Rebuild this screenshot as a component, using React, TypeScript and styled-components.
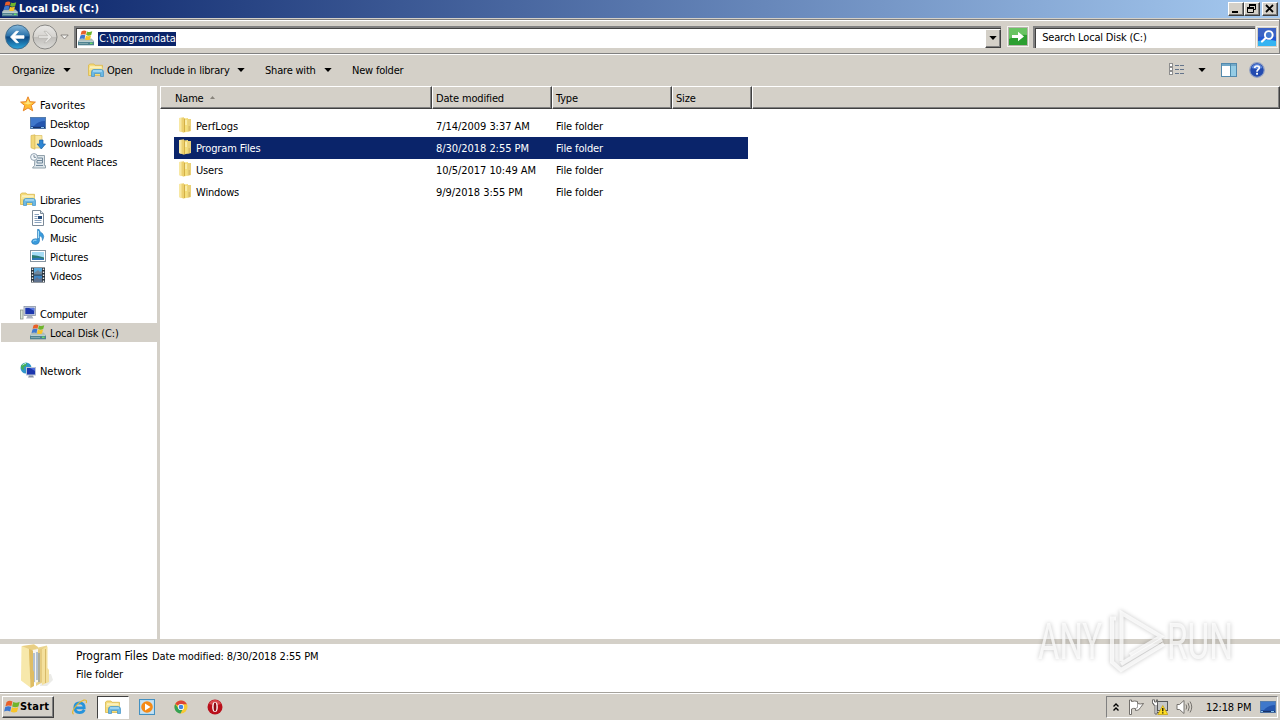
import React from "react";
import styled, { createGlobalStyle, css } from "styled-components";

const face = "#d4d0c8";
const navy = "#0a246a";

/* ---------- icons ---------- */

const Flag = () => (
    <>
        <path d="M1.500 2.300Q4.500 .4 7.200 2L6.200 6.400Q3.500 5 .4 6.500Z" fill="#e8602a" />
        <path d="M7.900 2.500Q11 4 14.200 2.200L13 6.700Q10 8.200 6.900 6.800Z" fill="#6fb52c" />
        <path d="M.2 7.200Q3.200 5.800 6 7.100L5 11.500Q2.300 10.200 -.9 11.500Z" fill="#3d78d0" />
        <path d="M6.700 7.500Q9.700 8.900 12.800 7.400L11.600 11.900Q8.600 13.300 5.600 11.900Z" fill="#f8c428" />
    </>
);

const DiskIcon = () => (
    <svg width="16" height="16" viewBox="0 0 16 16">
        <path d="M0 11L2 8.500H13.500L16 11V15H0Z" fill="#a9bab9" />
        <path d="M0 11.300H16V15.300H0Z" fill="#4f8290" />
        <path d="M.5 11.300H15.500" stroke="#cfdede" />
        <path d="M1 13.500H10" stroke="#83a8ae" />
        <rect x="12" y="12.600" width="2.500" height="1.400" fill="#69e067" />
        <g transform="translate(2.300 -.6) scale(.84)"><Flag /></g>
    </svg>
);

const StartFlag = () => (
    <svg width="16" height="16" viewBox="-1 .5 15.500 13.500"><Flag /></svg>
);

const LibraryIcon = () => (
    <svg width="16" height="16" viewBox="0 0 16 16">
        <path d="M.5 13.500V3L2 2H6L7 3.300H14.500V13.500Z" fill="#f5dc7c" stroke="#d9b84d" strokeWidth=".8" />
        <path d="M2 4.500H13.500V6H2Z" fill="#fffbe0" />
        <path d="M1 5.500H14.500V8H1Z" fill="#f7e698" />
        <path d="M3.500 14.500V10Q3.500 7.500 6 7.500H13Q15.500 7.500 15.500 10V14.500H12.500V11.500H6.500V14.500Z" fill="#6cb8e4" stroke="#4192c5" strokeWidth=".7" />
        <path d="M5 9H14" stroke="#cceefc" />
    </svg>
);

const StarIcon = () => (
    <svg width="16" height="16" viewBox="0 0 16 16">
        <path d="M8 .8L10 5.700L15.400 6.100L11.300 9.500L12.700 14.800L8 11.900L3.300 14.800L4.700 9.500L.6 6.100L6 5.700Z" fill="#ffbd32" stroke="#e8852a" strokeWidth="1" />
        <path d="M8 3L9.300 6.600L12.800 7L8 8.500L3.500 7L6.800 6.600Z" fill="#ffe680" />
    </svg>
);

const DesktopIcon = () => (
    <svg width="16" height="16" viewBox="0 0 16 16">
        <rect x=".5" y="2.500" width="15" height="11" fill="#2456ae" stroke="#567dac" />
        <path d="M1 3H15V6Q8 6 4 11H1Z" fill="#3f78cb" />
        <path d="M1 12.500H15" stroke="#183268" strokeWidth="1.400" />
        <path d="M1 12.500H3M11 12.500H14" stroke="#8ac4ef" />
    </svg>
);

const DownloadsIcon = () => (
    <svg width="16" height="16" viewBox="0 0 16 16">
        <path d="M1 1.500L5 .8V15.200L1 13.800Z" fill="#f2d778" stroke="#d8b754" strokeWidth=".7" />
        <path d="M5 1.500H12V14H5Z" fill="#f9e8a2" stroke="#ddbf62" strokeWidth=".7" />
        <path d="M9.500 6H13V10H15.500L11.300 15L7 10H9.500Z" fill="#2e86d4" stroke="#1c63a8" strokeWidth=".7" />
    </svg>
);

const RecentIcon = () => (
    <svg width="16" height="16" viewBox="0 0 16 16">
        <path d="M5 2.500H14.500V12.500H15.500V15H2.500L4.500 12.500Z" fill="#dde5ea" stroke="#8797a3" strokeWidth=".9" />
        <path d="M8 5H12.500V10H7V7.500H12M6 12.500H13" stroke="#71889b" fill="none" />
        <circle cx="4" cy="4" r="3.400" fill="#f5f9fc" stroke="#8799a8" strokeWidth=".9" />
        <path d="M4 2V4.300H6" stroke="#5a6f82" fill="none" strokeWidth=".8" />
    </svg>
);

const DocumentIcon = () => (
    <svg width="16" height="16" viewBox="0 0 16 16">
        <path d="M2.500 .5H10.500L13.500 3.500V15.500H2.500Z" fill="#fff" stroke="#7d8b99" />
        <path d="M10.500 .5V3.500H13.500" fill="#d8e2ea" stroke="#7d8b99" />
        <path d="M4.500 4.500H9M4.500 6.500H7.500M4.500 8.500H7.500M4.500 10.500H11.500M4.500 12.500H11.500" stroke="#8aa2bd" />
        <rect x="8" y="6" width="4" height="3" fill="#274c7c" />
    </svg>
);

const MusicIcon = () => (
    <svg width="16" height="16" viewBox="0 0 16 16">
        <path d="M7.500 .3H9Q9.500 3 12.500 4.500Q15 7 12.500 11.500Q13 8 9.500 6.500V12Q9 15.300 5.500 15.500Q1.500 15.400 1.500 12.600Q2 9.800 5.500 9.700L7.500 10Z" fill="#3a9bdc" stroke="#1d6fae" strokeWidth=".5" />
        <path d="M3 12.300Q4.500 10.700 6.500 11.200M8.500 2V9" stroke="#a9e0fa" fill="none" />
    </svg>
);

const PictureIcon = () => (
    <svg width="16" height="16" viewBox="0 0 16 16">
        <rect x=".5" y="2.500" width="15" height="11" fill="#fff" stroke="#8795a1" />
        <rect x="2" y="4" width="12" height="8" fill="#a5dcf5" />
        <path d="M2 7Q7 7 14 9.500V12H2Z" fill="#2c7c72" />
        <path d="M2 10.500Q8 9 14 11V12H2Z" fill="#2f77b8" />
    </svg>
);

const VideoIcon = () => (
    <svg width="16" height="16" viewBox="0 0 16 16">
        <rect x="1" y=".5" width="14" height="15" fill="#26323c" />
        <rect x="4" y="1" width="8" height="6.500" fill="#5aa9dc" />
        <rect x="4" y="8.500" width="8" height="6.500" fill="#3f86c4" />
        <path d="M4 6L8 3L10 5L12 4V7.500H4ZM4 13L7 10L9 12L12 11V15H4Z" fill="#8a5b4e" opacity=".45" />
        <path d="M2.500 1.500V15M13.500 1.500V15" stroke="#eee" strokeWidth="1.400" strokeDasharray="1.500 1.500" />
    </svg>
);

const ComputerIcon = () => (
    <svg width="16" height="16" viewBox="0 0 16 16">
        <rect x=".5" y="5" width="2.500" height="9" fill="#d9e4d5" stroke="#87948a" strokeWidth=".8" />
        <rect x="4" y="1.500" width="11.500" height="9" fill="#d4dae4" stroke="#8893a5" strokeWidth=".8" />
        <rect x="5.300" y="2.800" width="9" height="6.400" fill="#1b36ae" />
        <path d="M9 3H14.300V6Z" fill="#5878df" />
        <path d="M7.500 11H12L13.500 13.500H6Z" fill="#a9b1bf" />
    </svg>
);

const NetworkIcon = () => (
    <svg width="16" height="16" viewBox="0 0 16 16">
        <circle cx="6" cy="6" r="5.500" fill="#3095c9" />
        <path d="M1 4Q3 .6 7 1L6 4L3.500 5L4 8L1.500 7ZM6 6L9 5V9H6Z" fill="#45b04f" />
        <path d="M2.500 3Q4 1.500 6 1.500" stroke="#b8eaf4" fill="none" />
        <rect x="6.500" y="5.500" width="9" height="7.500" fill="#1c36ad" stroke="#bac4d6" />
        <path d="M10 6H15V9Z" fill="#4d6cdb" />
        <path d="M9 13.500H13L14 15.500H8Z" fill="#8791a6" />
    </svg>
);

const FolderIcon = () => (
    <svg width="16" height="16" viewBox="0 0 16 16">
        <path d="M2 1L7 .2V15.800L2 14Z" fill="#ecd06f" />
        <path d="M2 1H4.500V15L2 14Z" fill="#f8e8a4" />
        <path d="M7 1.500L11 1V14.500L7 15.500Z" fill="#f5e07c" />
        <path d="M10.500 2H14V14L10.500 15Z" fill="#ead17a" />
        <path d="M7.500 1.500V15" stroke="#cfa93f" strokeWidth=".9" />
        <path d="M9 3V8" stroke="#fff9d8" />
        <path d="M12.200 9V14" stroke="#c9a94f" strokeWidth=".7" />
    </svg>
);

const BigFolderIcon = () => (
    <svg width="36" height="46" viewBox="0 0 36 46">
        <path d="M25 31L33 30L35 36L29 42H22Z" fill="#ebebe8" />
        <path d="M4 2L16 .3L20 3V36L4 34Z" fill="#e9cf84" />
        <path d="M18 4L29 1.500V36L18 42Z" fill="#ead592" />
        <path d="M14 6L20 5V38L14 40Z" fill="#f8f6ef" />
        <path d="M16 9V38M19 8V36" stroke="#90a7c0" strokeWidth="1.300" />
        <path d="M20 6L26 3.500V37L20 40Z" fill="#e5cb80" />
        <path d="M21 9V38" stroke="#8298ae" strokeWidth="1.100" />
        <path d="M3.500 2L11 5L13 44L3 36.500Z" fill="#f7e8ab" />
        <path d="M11 5L15 6.500V26L16 28V42L12.500 44Z" fill="#dfbd63" />
        <path d="M24 5L29.500 2.500V24L31 26V38L24 41Z" fill="#f4e09c" />
        <path d="M27.500 5V39" stroke="#d8ba68" />
    </svg>
);

const BackIcon = () => (
    <svg width="26" height="26" viewBox="0 0 26 26">
        <defs>
            <linearGradient id="back" x2="0" y2="1">
                <stop offset="0" stopColor="#86b9dc" />
                <stop offset=".45" stopColor="#2a72aa" />
                <stop offset=".5" stopColor="#0d4781" />
                <stop offset="1" stopColor="#2ca6dc" />
            </linearGradient>
        </defs>
        <circle cx="12.600" cy="13" r="12" fill="url(#back)" stroke="#426d8d" />
        <path d="M5.500 13L11 7.300H13.500L9.800 11.700H19V14.300H9.800L13.500 18.700H11Z" fill="#fff" stroke="#fff" strokeWidth=".8" />
    </svg>
);

const ForwardIcon = () => (
    <svg width="26" height="26" viewBox="0 0 26 26">
        <defs>
            <linearGradient id="fwd" x2="0" y2="1">
                <stop offset="0" stopColor="#e9e8e6" />
                <stop offset=".48" stopColor="#d6d4d0" />
                <stop offset=".52" stopColor="#c0beba" />
                <stop offset="1" stopColor="#dddcd9" />
            </linearGradient>
        </defs>
        <circle cx="13" cy="13" r="12" fill="url(#fwd)" stroke="#898885" />
        <path d="M20 13L14.500 7.300H12L15.700 11.700H6.500V14.300H15.700L12 18.700H14.500Z" fill="#e6e5e2" stroke="#b3b1ad" strokeWidth=".7" />
    </svg>
);

const SmallDown = () => (
    <svg width="9" height="6" viewBox="0 0 9 6"><path d="M.8 1H8.200L4.500 5Z" fill="#f4f3f0" stroke="#77746f" strokeWidth=".8" /></svg>
);

const Arrow = () => (
    <svg width="8" height="4" viewBox="0 0 8 4"><path d="M.3 0H7.700L4 4Z" fill="#000" /></svg>
);

const GoIcon = () => (
    <svg width="18" height="17" viewBox="0 0 18 17">
        <rect width="18" height="17" fill="#2c9f31" />
        <path d="M0 0H18V7Q8 6 0 11Z" fill="#69c463" />
        <path d="M3 7H9V3.800L15 8.500L9 13.300V10H3Z" fill="#fff" />
    </svg>
);

const SearchIcon = () => (
    <svg width="18" height="18" viewBox="0 0 18 18">
        <rect width="18" height="18" fill="#3b62c4" />
        <path d="M0 9Q9 8 18 9V18H0Z" fill="#2257d2" />
        <path d="M0 13Q9 11 18 13V18H0Z" fill="#35b4f2" />
        <circle cx="10.800" cy="7" r="3.900" fill="#4379d0" stroke="#fff" strokeWidth="1.900" />
        <path d="M7.700 10L4 13.500" stroke="#fff" strokeWidth="2.200" strokeLinecap="round" />
    </svg>
);

const ViewIcon = () => (
    <svg width="16" height="13" viewBox="0 0 16 13">
        {[0, 4, 8].map((y) => (
            <g key={y}>
                <rect x=".5" y={y + 0.5} width="3" height="3" fill="#fff" stroke="#8e8e8e" />
                <path d={`M6 ${y + 2.5}H10M11 ${y + 2.5}H15`} stroke="#64748b" />
            </g>
        ))}
    </svg>
);

const PreviewIcon = () => (
    <svg width="16" height="14" viewBox="0 0 16 14">
        <rect x=".5" y=".5" width="15" height="13" fill="#fff" stroke="#5289ad" />
        <path d="M1 2H15" stroke="#71a8c8" strokeWidth="2" />
        <rect x="10" y="3" width="5" height="10" fill="#95cce5" />
        <path d="M9.500 1V13" stroke="#4c8bad" />
    </svg>
);

const HelpIcon = () => (
    <svg width="16" height="16" viewBox="0 0 16 16">
        <circle cx="8" cy="8" r="7.300" fill="#234bb0" stroke="#93a2c4" strokeWidth="1.200" />
        <path d="M2.500 6Q4 2 8 2Q12 2 13.500 6Q8 8 2.500 6Z" fill="#5e87db" />
        <path d="M5.700 6Q5.800 4 8 4Q10.400 4 10.300 6Q10.200 7 9 7.800Q8 8.500 8 9.700" fill="none" stroke="#fff" strokeWidth="1.700" />
        <rect x="7.100" y="10.800" width="1.900" height="1.900" fill="#fff" />
    </svg>
);

const IeIcon = () => (
    <svg width="16" height="16" viewBox="0 0 16 16">
        <path d="M13.300 10.800Q11.800 13.600 8.500 13.600Q3.800 13.300 3.800 8.700Q4 4 8.500 3.900Q13.300 4.100 13.200 8.900H5" fill="none" stroke="#2593dc" strokeWidth="2.800" />
        <path d="M2.500 15.200Q.2 13.500 3.500 9Q7.500 3.200 12.500 1.200Q16.300 .2 15.300 4" fill="none" stroke="#e5b72f" strokeWidth="1.200" />
    </svg>
);

const WmpIcon = () => (
    <svg width="16" height="16" viewBox="0 0 16 16">
        <rect x=".5" y=".5" width="15" height="15" fill="#b8dcf1" stroke="#4390c1" />
        <rect x="2" y="2" width="12" height="12" fill="#c8e2f3" />
        <circle cx="8" cy="8" r="5.800" fill="#f58a16" />
        <path d="M6 4.500L11.500 8L6 11.500Z" fill="#fff" />
    </svg>
);

const ChromeIcon = () => (
    <svg width="14" height="14" viewBox="0 0 14 14">
        <circle cx="7" cy="7" r="6.500" fill="#f7c934" />
        <path d="M7 7L1.200 3.900A6.500 6.500 0 0 1 12.900 4.200H7Z" fill="#dd4437" />
        <path d="M1.200 3.900L4.500 8.500L8.500 9.500L6.500 13.500A6.500 6.500 0 0 1 1.200 3.900Z" fill="#34a155" />
        <circle cx="7" cy="7" r="3.100" fill="#fff" />
        <circle cx="7" cy="7" r="2.300" fill="#4285e0" />
    </svg>
);

const OperaIcon = () => (
    <svg width="16" height="16" viewBox="0 0 16 16">
        <circle cx="8" cy="8" r="7.500" fill="#b90f1b" />
        <path d="M2 5Q4 1 8 1Q12 1 14 5Q8 7 2 5Z" fill="#d9494e" />
        <ellipse cx="8" cy="8" rx="2.800" ry="5" fill="#fff" />
        <ellipse cx="8" cy="8" rx="1.400" ry="4.400" fill="#8f0a14" />
    </svg>
);

const ChevronsIcon = () => (
    <svg width="6" height="9" viewBox="0 0 6 9"><path d="M.5 3.500L3 1L5.500 3.500M.5 7.500L3 5L5.500 7.500" fill="none" stroke="#000" strokeWidth="1.400" /></svg>
);

const ActionFlagIcon = () => (
    <svg width="16" height="16" viewBox="0 0 16 16">
        <path d="M1.500 1V15.500H3.500V10Q5.500 9 7.500 9.500V11.500Q11 12 12.500 8.500L15.500 4.500Q12 5.500 9.500 4.500V2.500Q7 1.500 3.500 2.500V1Z" fill="#fff" stroke="#65625d" strokeWidth=".9" />
        <path d="M9.500 4.500V8.500L7.500 9.500" stroke="#888" strokeWidth=".8" fill="none" />
    </svg>
);

const TrayNetworkIcon = () => (
    <svg width="16" height="16" viewBox="0 0 16 16">
        <rect x="5.500" y="2.500" width="10" height="9" fill="#c6c8c8" stroke="#55585a" />
        <path d="M.5 .8V4.500H1.500V6H3V15H5V6H5.500V.8H4.500V3H2.500V.8Z" fill="#fff" stroke="#4e4e4e" strokeWidth=".8" />
        <path d="M5 13.500H9" stroke="#555" />
        <path d="M10.800 6.500L15.800 15.500H5.800Z" fill="#ffde24" stroke="#c29b00" strokeWidth=".7" />
        <path d="M10.800 9V12.300M10.800 13.200V14.500" stroke="#000" strokeWidth="1.200" />
    </svg>
);

const VolumeIcon = () => (
    <svg width="17" height="16" viewBox="0 0 17 16">
        <path d="M1 5.500H3.500L8 1.500V14.500L3.500 10.500H1Z" fill="#fff" stroke="#6a6762" strokeWidth=".9" />
        <path d="M10 5.500Q11.500 8 10 10.500M12 3.800Q14.500 8 12 12.200M14 2.500Q17.500 8 14 13.500" fill="none" stroke="#6a6762" strokeWidth=".9" />
    </svg>
);

/* ---------- data ---------- */

const places = [
    { name: "Favorites", icon: <StarIcon />, root: true, ls: 0.08 },
    { name: "Desktop", icon: <DesktopIcon /> },
    { name: "Downloads", icon: <DownloadsIcon /> },
    { name: "Recent Places", icon: <RecentIcon />, ls: -0.12 },
    null,
    { name: "Libraries", icon: <LibraryIcon />, root: true, ls: -0.27 },
    { name: "Documents", icon: <DocumentIcon />, ls: -0.3 },
    { name: "Music", icon: <MusicIcon />, ls: -0.3 },
    { name: "Pictures", icon: <PictureIcon />, ls: -0.12 },
    { name: "Videos", icon: <VideoIcon /> },
    null,
    { name: "Computer", icon: <ComputerIcon />, root: true, ls: -0.27 },
    { name: "Local Disk (C:)", icon: <DiskIcon />, active: true, ls: -0.17 },
    null,
    { name: "Network", icon: <NetworkIcon />, root: true, ls: -0.05 },
];

const files = [
    { name: "PerfLogs", date: "7/14/2009 3:37 AM", ls: 0.03 },
    { name: "Program Files", date: "8/30/2018 2:55 PM", selected: true },
    { name: "Users", date: "10/5/2017 10:49 AM" },
    { name: "Windows", date: "9/9/2018 3:55 PM" },
];

const App = () => (
    <>
        <GlobalStyle />
        <Screen>
            <TitleBar>
                <DiskIcon />
                <TitleText>Local Disk (C:)</TitleText>
                <CaptionButton>
                    <svg width="12" height="11"><path d="M3 9H9" stroke="#000" strokeWidth="2" /></svg>
                </CaptionButton>
                <CaptionButton>
                    <svg width="12" height="11">
                        <path d="M4.500 1V4M10.500 1V6.500H8M2.500 4V9.500H8.500V4" fill="none" stroke="#000" />
                        <path d="M4 2H11M2 5H9" stroke="#000" strokeWidth="2" />
                    </svg>
                </CaptionButton>
                <CaptionButton $gap={2}>
                    <svg width="12" height="11"><path d="M3 2L10 9M10 2L3 9" stroke="#000" strokeWidth="1.800" /></svg>
                </CaptionButton>
            </TitleBar>

            <NavBar>
                <BackIcon />
                <ForwardIcon />
                <SmallDown />
                <AddressBox>
                    <DiskIcon />
                    <Selection>C:\programdata</Selection>
                    <DropButton><Arrow /></DropButton>
                </AddressBox>
                <GoButton><GoIcon /></GoButton>
                <SearchBox>Search Local Disk (C:)</SearchBox>
                <SearchButton><SearchIcon /></SearchButton>
            </NavBar>

            <Toolbar>
                <Command $w={51}>Organize</Command>
                <Command $w={25}><Arrow /></Command>
                <Command $w={19}><LibraryIcon /></Command>
                <Command $w={43}>Open</Command>
                <Command $w={87}>Include in library</Command>
                <Command $w={28}><Arrow /></Command>
                <Command $w={59}>Share with</Command>
                <Command $w={28}><Arrow /></Command>
                <Command $w={80}>New folder</Command>
                <ToolbarEnd>
                    <ViewIcon />
                    <Arrow />
                    <PreviewIcon />
                    <HelpIcon />
                </ToolbarEnd>
            </Toolbar>

            <Main>
                <Sidebar>
                    {places.map((place, i) =>
                        place ? (
                            <Place key={i} $root={place.root} $active={place.active}>
                                {place.icon}
                                <Label $ls={place.ls}>{place.name}</Label>
                            </Place>
                        ) : (
                            <Place key={i} />
                        )
                    )}
                </Sidebar>
                <Content>
                    <HeaderRow>
                        <HeaderCell $pad={14}>
                            Name
                            <svg width="5" height="3"><path d="M0 3L2.500 0L5 3Z" fill="#88847c" /></svg>
                        </HeaderCell>
                        <HeaderCell>Date modified</HeaderCell>
                        <HeaderCell>Type</HeaderCell>
                        <HeaderCell>Size</HeaderCell>
                        <HeaderCell />
                    </HeaderRow>
                    <FileList>
                        {files.map((file) => (
                            <FileRow key={file.name} $selected={file.selected}>
                                <FileName><FolderIcon /><Label $ls={file.ls ?? -0.15}>{file.name}</Label></FileName>
                                <Label $ls={-0.05}>{file.date}</Label>
                                <Label $ls={-0.12}>File folder</Label>
                            </FileRow>
                        ))}
                    </FileList>
                </Content>
            </Main>

            <Details>
                <BigFolderIcon />
                <DetailsText>
                    <DetailsLine>
                        <DetailsName>Program Files</DetailsName>
                        <Label $ls={-0.12}>Date modified: 8/30/2018 2:55 PM</Label>
                    </DetailsLine>
                    <DetailsLine><Label $ls={-0.12}>File folder</Label></DetailsLine>
                </DetailsText>
            </Details>

            <Taskbar>
                <StartButton><StartFlag />Start</StartButton>
                <TaskButton><IeIcon /></TaskButton>
                <TaskButton $active><LibraryIcon /></TaskButton>
                <TaskButton><WmpIcon /></TaskButton>
                <TaskButton><ChromeIcon /></TaskButton>
                <TaskButton><OperaIcon /></TaskButton>
                <Tray>
                    <ChevronsIcon />
                    <ActionFlagIcon />
                    <TrayNetworkIcon />
                    <VolumeIcon />
                    <Clock>12:18 PM</Clock>
                    <DesktopIcon />
                </Tray>
            </Taskbar>

            <Watermark width="220" height="90" viewBox="0 0 220 90">
                <text x="4" y="54" textLength="64" lengthAdjust="spacingAndGlyphs">ANY</text>
                <text x="133" y="54" textLength="66" lengthAdjust="spacingAndGlyphs">RUN</text>
                <path d="M87.500 56V8L127 31.500L96 50" />
                <path d="M82 13.500H78V57L87 65L130 39" />
                <path d="M87 59L128 34.500" />
            </Watermark>
        </Screen>
    </>
);

/* ---------- styles ---------- */

const GlobalStyle = createGlobalStyle`
    body {
        margin: 0;
        overflow: hidden;
    }

    * {
        box-sizing: border-box;
    }

    svg {
        display: block;
        flex: none;
    }
`;

const raised = css`
    background: ${face};
    border: 1px solid;
    border-color: #fff #404040 #404040 #fff;
    box-shadow: inset -1px -1px 0 #808080;
`;

const Screen = styled.div`
    position: relative;
    width: 1280px;
    height: 720px;
    display: flex;
    flex-direction: column;
    background: ${face};
    color: #000;
    font: 11px/14px "DejaVu Sans Condensed", "DejaVu Sans", sans-serif;
    letter-spacing: -0.2px;
    white-space: nowrap;
    overflow: hidden;
`;

const Label = styled.span<{ $ls?: number }>`
    padding-top: 1px;
    letter-spacing: ${({ $ls = -0.2 }) => $ls}px;
`;

const TitleBar = styled.div`
    height: 18px;
    display: flex;
    align-items: center;
    padding: 0 2px;
    background: linear-gradient(90deg, ${navy}, #a6caf0);
`;

const TitleText = styled.div`
    flex: 1;
    padding-left: 1px;
    color: #fff;
    font-weight: bold;
    letter-spacing: -0.02px;
`;

const CaptionButton = styled.div<{ $gap?: number }>`
    ${raised}
    width: 16px;
    height: 14px;
    margin-left: ${({ $gap = 0 }) => $gap}px;
`;

const NavBar = styled.div`
    height: 35px;
    display: flex;
    align-items: center;
    margin: 1px 0;
    padding: 0 1px 0 5px;
    border-top: 1px solid #808080;
    border-bottom: 1px solid #808080;
    border-right: 1px solid #808080;
    box-shadow: inset 0 1px 0 #fff, 0 1px 0 #fff;

    > svg:nth-child(2) {
        margin: 0 2px 0 1px;
    }
`;

const AddressBox = styled.div`
    height: 22px;
    width: 928px;
    display: flex;
    align-items: center;
    margin-left: 5px;
    padding-left: 2px;
    background: #fff;
    border-top: 2px solid #808080;
    border-left: 2px solid #808080;
    box-shadow: inset 1px 1px 0 #404040;
`;

const Selection = styled.span`
    margin: 2px 0 0 4px;
    padding-left: 1px;
    background: ${navy};
    color: #fff;
    letter-spacing: -0.1px;
`;

const DropButton = styled.div`
    ${raised}
    width: 16px;
    height: 19px;
    margin: 1px 0 0 auto;
    display: flex;
    align-items: center;
    justify-content: center;
`;

const GoButton = styled.div`
    width: 22px;
    height: 21px;
    margin: 0 4px 0 6px;
    display: flex;
    align-items: center;
    justify-content: center;
    border: 1px solid #f4f4f0;
    outline: 1px solid #b8b4ac;
    outline-offset: -2px;
`;

const SearchBox = styled.div`
    width: 222px;
    height: 22px;
    padding: 3px 0 0 7px;
    background: #fff;
    border-top: 2px solid #808080;
    border-left: 2px solid #808080;
    box-shadow: inset 1px 1px 0 #404040;
    letter-spacing: -0.17px;
`;

const SearchButton = styled.div`
    margin-left: 1px;
    padding: 1px;
    border: 1px solid #f4f4f0;
`;

const Toolbar = styled.div`
    height: 31px;
    display: flex;
    align-items: center;
    padding: 0 15px 0 12px;
`;

const Command = styled.div<{ $w: number }>`
    width: ${({ $w }) => $w}px;
    flex: none;

    > svg {
        margin-bottom: 2px;
    }
`;

const ToolbarEnd = styled.div`
    display: flex;
    align-items: center;
    gap: 13px;
    margin-left: auto;
    padding-bottom: 2px;

    > svg:nth-child(3) {
        margin-left: 2px;
    }

    > svg:last-child {
        margin-left: -1px;
    }
`;

const Main = styled.div`
    height: 553px;
    display: flex;
`;

const Sidebar = styled.div`
    width: 160px;
    padding: 9px 0 0 1px;
    background: #fff;
    border-right: 3px solid ${face};
`;

const Place = styled.div<{ $root?: boolean; $active?: boolean }>`
    height: 19px;
    display: flex;
    align-items: center;
    gap: 4px;
    padding: 2px 0 0 ${({ $root }) => ($root ? 19 : 29)}px;
    background: ${({ $active }) => ($active ? face : "transparent")};

    > svg {
        margin-top: -4px;
    }
`;

const Content = styled.div`
    flex: 1;
    background: #fff;
`;

const HeaderRow = styled.div`
    height: 23px;
    display: grid;
    grid-template-columns: 272px 120px 120px 80px 1fr;
`;

const HeaderCell = styled.div<{ $pad?: number }>`
    ${raised}
    display: flex;
    align-items: center;
    gap: 6px;
    padding: 2px 0 0 ${({ $pad = 3 }) => $pad}px;
    letter-spacing: -0.17px;

    > svg {
        margin-top: -2px;
    }
`;

const FileList = styled.div`
    padding: 6px 0 0 14px;
`;

const FileRow = styled.div<{ $selected?: boolean }>`
    width: 574px;
    height: 22px;
    display: grid;
    grid-template-columns: 262px 120px 1fr;
    align-items: center;
    background: ${({ $selected }) => ($selected ? navy : "transparent")};
    color: ${({ $selected }) => ($selected ? "#fff" : "#000")};
`;

const FileName = styled.div`
    display: flex;
    align-items: center;
    gap: 3px;
    padding-left: 3px;

    > svg {
        margin-top: -2px;
    }
`;

const Details = styled.div`
    height: 53px;
    display: flex;
    padding-left: 18px;
    background: #fff;
    border-top: 5px solid ${face};
`;

const DetailsText = styled.div`
    padding: 3px 0 0 22px;
`;

const DetailsLine = styled.div`
    height: 18px;
    display: flex;
    align-items: center;
`;

const DetailsName = styled.span`
    width: 76px;
    font-size: 12px;
    letter-spacing: -0.05px;
`;

const Taskbar = styled.div`
    height: 28px;
    display: flex;
    align-items: center;
    padding: 1px 2px 0;
    border-top: 1px solid #a5a29c;
    box-shadow: inset 0 1px 0 #fff;
`;

const StartButton = styled.div`
    ${raised}
    width: 52px;
    height: 22px;
    display: flex;
    align-items: center;
    margin-right: 9px;
    padding-left: 1px;
    font-weight: bold;
    letter-spacing: 0.2px;
`;

const TaskButton = styled.div<{ $active?: boolean }>`
    width: 32px;
    height: 23px;
    margin-right: 2px;
    display: flex;
    align-items: center;
    justify-content: center;
    ${({ $active }) =>
        $active &&
        css`
            background: #fff;
            border: 1px solid;
            border-color: #404040 #fff #fff #404040;
        `}
`;

const Tray = styled.div`
    width: 172px;
    height: 22px;
    display: flex;
    align-items: center;
    margin-left: auto;
    padding-left: 6px;
    border: 1px solid;
    border-color: #808080 #fff #fff #808080;

    > svg + svg {
        margin-left: 8px;
    }

    > svg:nth-child(2) {
        margin-left: 9px;
    }
`;

const Clock = styled.span`
    width: 54px;
    margin-left: 13px;
    padding-top: 1px;
    letter-spacing: -0.1px;
`;

/* translucent logo stamped over the corner of the desktop */
const Watermark = styled.svg`
    position: absolute;
    left: 1034px;
    top: 605px;
    overflow: visible;
    filter: drop-shadow(0 0 2px rgba(0, 0, 0, 0.3));

    text {
        fill: rgba(255, 255, 255, 0.75);
        font: 50px Roboto, sans-serif;
        letter-spacing: 0;
    }

    path {
        fill: none;
        stroke: rgba(255, 255, 255, 0.75);
        stroke-width: 4;
    }
`;

export default App;
